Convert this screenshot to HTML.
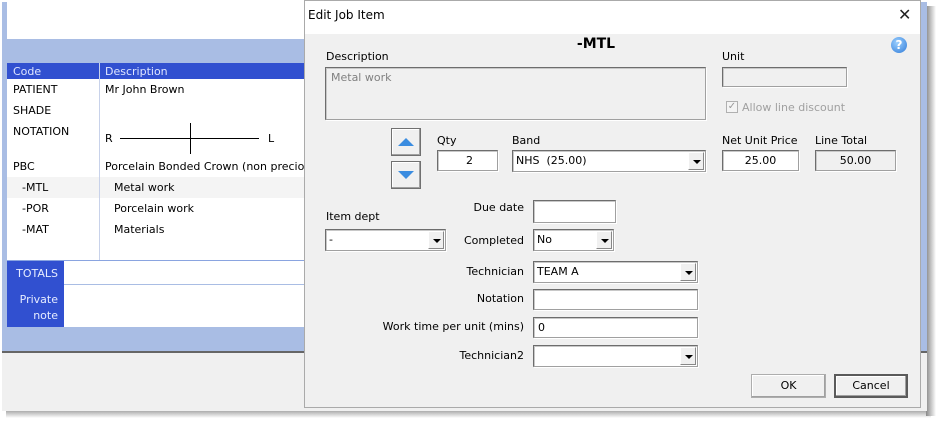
<!DOCTYPE html>
<html><head><meta charset="utf-8"><style>
*{box-sizing:border-box;margin:0;padding:0}
body{width:940px;height:426px;background:#fff;position:relative;overflow:hidden;font-family:"DejaVu Sans","Liberation Sans",sans-serif;font-size:11px;color:#000}
.a{position:absolute}
.t{position:absolute;white-space:nowrap;line-height:13px}
.in{position:absolute;background:#fff;border:1px solid #a0a0a0;border-top-color:#6d6d6d;border-left-color:#6d6d6d;box-shadow:inset 1px 1px 0 #c8c8c8, 1px 1px 0 #fff}
.dd{position:absolute;right:1px;top:1px;bottom:1px;width:16px;background:#f0f0f0;border:1px solid #888;border-top-color:#fff;border-left-color:#fff}
.dd:after{content:"";position:absolute;left:4px;top:7px;border-left:4px solid transparent;border-right:4px solid transparent;border-top:4px solid #000}
.lbl{position:absolute;white-space:nowrap;text-align:right;width:200px;line-height:13px}
.btn{position:absolute;background:#f0f0f0;border:1px solid #707070;box-shadow:inset -1px -1px 0 #a0a0a0, inset 1px 1px 0 #fff;text-align:center;line-height:22px}
</style></head><body>
<div class="a" style="left:6px;top:408px;width:925px;height:10px;background:linear-gradient(#888,#fff)"></div>
<div class="a" style="left:926px;top:6px;width:10px;height:410px;background:linear-gradient(90deg,#888,#fff)"></div>
<div class="a" style="left:2px;top:2px;width:925px;height:349px;background:#a9bde4"></div>
<div class="a" style="left:2px;top:351px;width:925px;height:2px;background:#666"></div>
<div class="a" style="left:2px;top:353px;width:925px;height:58px;background:#f0f0f0"></div>
<div class="a" style="left:7px;top:2px;width:300px;height:37px;background:#fff"></div>
<div class="a" style="left:7px;top:63px;width:300px;height:197px;background:#fff"></div>
<div class="a" style="left:7px;top:63px;width:300px;height:16px;background:#3150d0"></div>
<div class="a" style="left:99px;top:63px;width:1px;height:197px;background:#c8d2ea"></div>
<div class="a" style="left:7px;top:177px;width:300px;height:21px;background:#f4f4f4"></div>
<div class="a" style="left:99px;top:177px;width:1px;height:21px;background:#c8d2ea"></div>
<div class="a" style="left:7px;top:260px;width:300px;height:1px;background:#8aa4e0"></div>
<div class="a" style="left:64px;top:261px;width:243px;height:66px;background:#fff"></div>
<div class="a" style="left:64px;top:284px;width:243px;height:1px;background:#a9bde4"></div>
<div class="a" style="left:7px;top:261px;width:57px;height:66px;background:#3150d0"></div>
<div class="t" style="left:13px;top:65px;color:#dfe6ff">Code</div>
<div class="t" style="left:105px;top:65px;color:#dfe6ff">Description</div>
<div class="t" style="left:13px;top:83px">PATIENT</div>
<div class="t" style="left:105px;top:83px">Mr John Brown</div>
<div class="t" style="left:13px;top:104px">SHADE</div>
<div class="t" style="left:13px;top:125px">NOTATION</div>
<div class="t" style="left:105px;top:132px">R</div>
<div class="a" style="left:120px;top:138px;width:139px;height:1px;background:#000"></div>
<div class="a" style="left:190px;top:123px;width:1px;height:31px;background:#000"></div>
<div class="t" style="left:268px;top:132px">L</div>
<div class="t" style="left:13px;top:160px">PBC</div>
<div class="t" style="left:105px;top:160px">Porcelain Bonded Crown (non precious)</div>
<div class="t" style="left:22px;top:181px">-MTL</div><div class="t" style="left:114px;top:181px">Metal work</div>
<div class="t" style="left:22px;top:202px">-POR</div><div class="t" style="left:114px;top:202px">Porcelain work</div>
<div class="t" style="left:22px;top:223px">-MAT</div><div class="t" style="left:114px;top:223px">Materials</div>
<div class="t" style="left:7px;top:267px;width:51px;text-align:right;color:#e6ecff">TOTALS</div>
<div class="t" style="left:7px;top:292px;width:51px;text-align:right;color:#e6ecff;line-height:16px;white-space:normal">Private note</div>
<div class="a" style="left:304px;top:0;width:617px;height:408px;background:#f0f0f0;border:1px solid #aaa;overflow:hidden">
<div class="a" style="left:0;top:0;width:617px;height:33px;background:#fff"></div>
</div>
<div class="t" style="left:308px;top:9px;font-size:12px">Edit Job Item</div>
<div class="t" style="left:898px;top:6px;font-size:16px;line-height:18px;color:#222">✕</div>
<div class="t" style="left:560px;top:36px;width:72px;text-align:center;font-size:14px;font-weight:bold;line-height:16px">-MTL</div>
<div class="a" style="left:891px;top:37px;width:16px;height:16px;border-radius:50%;background:radial-gradient(circle at 40% 35%,#9cd0ff,#2f7bd8);color:#fff;font-weight:bold;font-size:12px;line-height:16px;text-align:center">?</div>
<div class="t" style="left:326px;top:50px">Description</div>
<div class="in" style="left:325px;top:67px;width:381px;height:53px;background:#f0f0f0"></div>
<div class="t" style="left:331px;top:71px;color:#808080">Metal work</div>
<div class="t" style="left:722px;top:50px">Unit</div>
<div class="in" style="left:722px;top:67px;width:125px;height:20px;background:#f0f0f0"></div>
<div class="a" style="left:726px;top:101px;width:12px;height:12px;border:1px solid #b0b0b0;background:#f4f4f4;color:#999;font-size:10px;line-height:10px;text-align:center">✓</div>
<div class="t" style="left:742px;top:101px;color:#a0a0a0">Allow line discount</div>
<div class="btn" style="left:391px;top:128px;width:30px;height:28px"></div>
<div class="a" style="left:398px;top:138px;border-left:8px solid transparent;border-right:8px solid transparent;border-bottom:8px solid #3a8ce0"></div>
<div class="btn" style="left:391px;top:161px;width:30px;height:28px"></div>
<div class="a" style="left:398px;top:171px;border-left:8px solid transparent;border-right:8px solid transparent;border-top:8px solid #3a8ce0"></div>
<div class="t" style="left:437px;top:134px">Qty</div>
<div class="in" style="left:437px;top:150px;width:61px;height:21px;text-align:center;line-height:19px;padding-left:4px">2</div>
<div class="t" style="left:512px;top:134px">Band</div>
<div class="in" style="left:512px;top:150px;width:194px;height:22px;line-height:20px;padding-left:3px">NHS&nbsp; (25.00)<div class="dd"></div></div>
<div class="t" style="left:722px;top:134px">Net Unit Price</div>
<div class="in" style="left:722px;top:150px;width:77px;height:21px;text-align:center;line-height:19px">25.00</div>
<div class="t" style="left:815px;top:134px">Line Total</div>
<div class="in" style="left:815px;top:150px;width:81px;height:21px;text-align:center;line-height:19px;background:#f0f0f0">50.00</div>
<div class="t" style="left:326px;top:210px">Item dept</div>
<div class="in" style="left:325px;top:229px;width:121px;height:22px;line-height:20px;padding-left:3px">-<div class="dd"></div></div>
<div class="lbl" style="left:324px;top:201px">Due date</div>
<div class="in" style="left:533px;top:200px;width:83px;height:23px"></div>
<div class="lbl" style="left:324px;top:234px">Completed</div>
<div class="in" style="left:533px;top:229px;width:81px;height:22px;line-height:20px;padding-left:3px">No<div class="dd"></div></div>
<div class="lbl" style="left:324px;top:265px">Technician</div>
<div class="in" style="left:533px;top:261px;width:165px;height:22px;line-height:20px;padding-left:3px">TEAM A<div class="dd"></div></div>
<div class="lbl" style="left:324px;top:292px">Notation</div>
<div class="in" style="left:533px;top:289px;width:165px;height:21px"></div>
<div class="lbl" style="left:324px;top:320px">Work time per unit (mins)</div>
<div class="in" style="left:533px;top:317px;width:165px;height:21px;line-height:19px;padding-left:4px">0</div>
<div class="lbl" style="left:324px;top:349px">Technician2</div>
<div class="in" style="left:533px;top:345px;width:165px;height:22px"><div class="dd"></div></div>
<div class="btn" style="left:751px;top:374px;width:75px;height:24px;border-color:#adadad">OK</div>
<div class="btn" style="left:834px;top:374px;width:74px;height:24px;border:2px solid #5a5a5a;line-height:20px">Cancel</div>
</body></html>
